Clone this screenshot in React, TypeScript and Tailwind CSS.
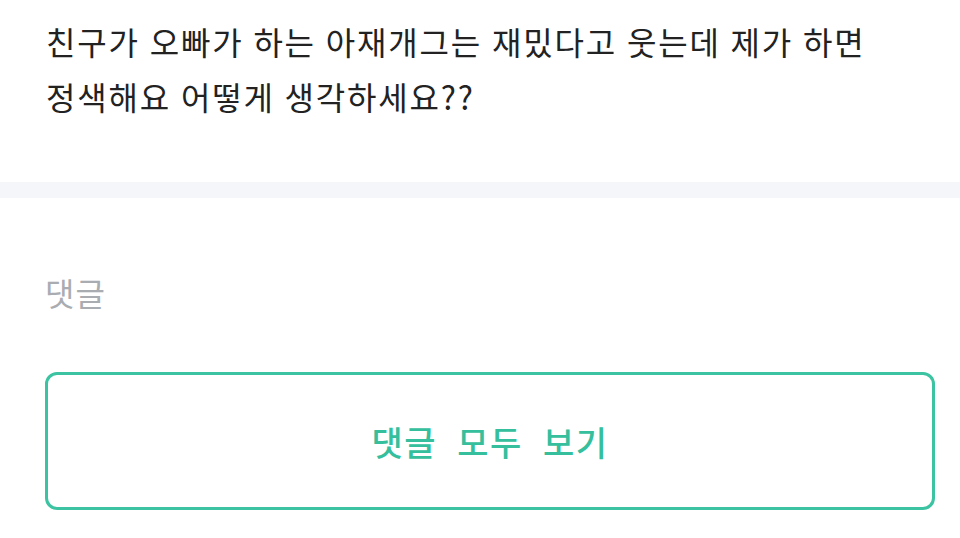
export default function App() {
  return (
    <div className="w-[960px] h-[538px] bg-white overflow-hidden font-['Noto_Sans_CJK_KR','Noto_Sans',sans-serif]">
      {/* 본문 */}
      <div className="h-[182px] px-[46px] pt-[14px]">
        <p className="text-[32px] leading-[55px] text-[#222222] tracking-[1.8px] [word-spacing:1px]">
          친구가 오빠가 하는 아재개그는 재밌다고 웃는데 제가 하면
          <br />
          정색해요 어떻게 생각하세요??
        </p>
      </div>

      {/* 구분선 */}
      <div className="h-[16px] bg-[#f5f6f9]" />

      {/* 댓글 */}
      <div className="px-[45px] pt-[74px]">
        <h2 className="text-[32px] leading-[40px] text-[#a9acb1] tracking-[1px]">댓글</h2>
        <button className="mt-[60px] w-[890px] h-[138px] rounded-[12px] border-[3px] border-[#3cc3a1] bg-white flex items-center justify-center">
          <span className="text-[34px] font-medium text-[#35bf9c] tracking-[1.5px] [word-spacing:11px]">댓글 모두 보기</span>
        </button>
      </div>
    </div>
  )
}
